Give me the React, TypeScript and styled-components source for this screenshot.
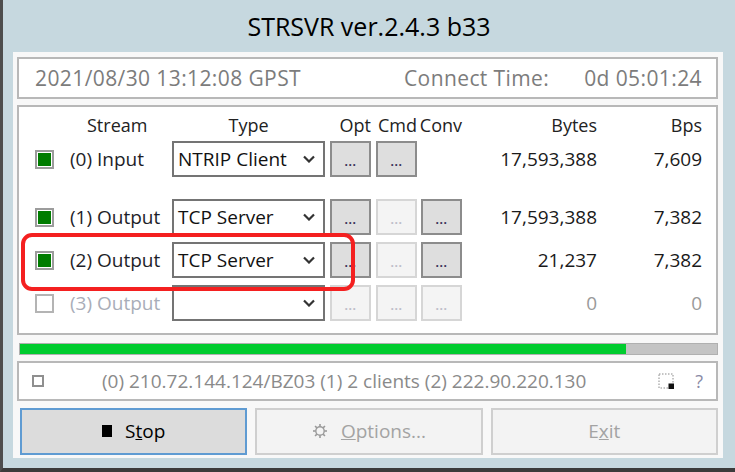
import React from "react";
import styled, { createGlobalStyle } from "styled-components";

const FONT = `"Open Sans", "Noto Sans", "DejaVu Sans", sans-serif`;
const COLS = "35px 102px 153px 46px 46px 45px 135px 105px";

const Global = createGlobalStyle`
  html, body { margin: 0; padding: 0; background: #c6d8df; }
  body { font-family: ${FONT}; }
  * { box-sizing: border-box; }
`;

const Window = styled.div`
  width: 735px;
  height: 472px;
  background: #c6d8df;
  border-left: 3px solid #4d4d4d;
  border-bottom: 4px solid #3b3b3b;
  display: flex;
  flex-direction: column;
  overflow: hidden;
`;

const TitleBar = styled.div`
  height: 52px;
  display: flex;
  align-items: center;
  justify-content: center;
  padding-bottom: 1px;
  font-size: 25px;
  color: #000;
`;

const Client = styled.div`
  flex: 1;
  margin: 0 12px 10px 10px;
  background: #f8f8f8;
  padding: 5px 5px 3px 4px;
  display: flex;
  flex-direction: column;
`;

const Panel = styled.div`
  background: #fff;
  border: 2px solid #b8b8b8;
`;

const TimePanel = styled(Panel)`
  height: 42px;
  display: flex;
  align-items: center;
  padding: 0 14px 0 16px;
  font-size: 21px;
  letter-spacing: 0.4px;
  color: #7c7c7c;
`;

const ConnectLabel = styled.span`
  margin-left: auto;
  margin-right: 35px;
`;

const StreamPanel = styled(Panel)`
  position: relative;
  margin-top: 6px;
  height: 230px;
  padding: 0 14px 12px 16px;
  display: flex;
  flex-direction: column;
  gap: 7px;
`;

const HeaderRow = styled.div`
  display: grid;
  grid-template-columns: ${COLS};
  height: 34px;
  align-items: center;
  font-size: 18px;
  color: #222;
  margin-bottom: -7px;
`;

const HeadCell = styled.span<{ $align?: "start" | "center" | "end"; $col: number; $pad?: number }>`
  grid-column: ${(p) => p.$col};
  justify-self: ${(p) => p.$align ?? "center"};
  padding-left: ${(p) => p.$pad ?? 0}px;
  padding-top: 2px;
`;

const Row = styled.div<{ $spaced?: boolean }>`
  display: grid;
  grid-template-columns: ${COLS};
  height: 36px;
  align-items: center;
  margin-bottom: ${(p) => (p.$spaced ? 15 : 0)}px;
`;

const Check = styled.span<{ $on: boolean }>`
  width: 19px;
  height: 19px;
  border: 2px solid ${(p) => (p.$on ? "#9c9c9c" : "#b4b4b4")};
  padding: 1px;
  background: ${(p) => (p.$on ? "#007c00" : "#fff")};
  background-clip: content-box;
`;

const Label = styled.span<{ $off?: boolean }>`
  font-size: 19px;
  color: ${(p) => (p.$off ? "#a9adb8" : "#1e1e28")};
  white-space: nowrap;
`;

const Combo = styled.div`
  width: 153px;
  height: 36px;
  border: 2px solid #747474;
  background: #fff;
  display: flex;
  align-items: center;
  justify-content: space-between;
  padding: 0 8px 0 4px;
  font-size: 19px;
  color: #111;
  white-space: nowrap;
`;

const DotBtn = styled.div<{ $off?: boolean }>`
  justify-self: end;
  width: 41px;
  height: 36px;
  border: 2px solid ${(p) => (p.$off ? "#d6d6d6" : "#8c8c8c")};
  background: ${(p) => (p.$off ? "#f4f4f4" : "#dedede")};
  color: ${(p) => (p.$off ? "#bdbdc8" : "#3a2e58")};
  display: flex;
  align-items: center;
  justify-content: center;
  padding-top: 5px;
  font-size: 12px;
  font-weight: 700;
  letter-spacing: 0.5px;
`;

const Num = styled.span<{ $off?: boolean }>`
  justify-self: end;
  font-size: 19px;
  color: ${(p) => (p.$off ? "#9a9a9a" : "#1a1a1a")};
`;

const Highlight = styled.div`
  position: absolute;
  left: 2px;
  top: 126px;
  width: 334px;
  height: 58px;
  border: 4px solid #f42020;
  border-radius: 11px;
  pointer-events: none;
`;

const Progress = styled.div`
  margin: 8px 0 0 2px;
  height: 12px;
  border: 1px solid #b0b0b0;
  background: #c4c4c4;
`;

const ProgressFill = styled.div`
  height: 100%;
  background: #00cc2e;
`;

const StatusPanel = styled(Panel)`
  margin-top: 6px;
  height: 40px;
  display: flex;
  align-items: center;
  padding: 0 13px 0 13px;
  font-size: 19px;
  color: #8a8a8a;
`;

const SmallCheck = styled.span`
  width: 12px;
  height: 12px;
  border: 2px solid #8f8f8f;
  background: #fff;
  flex: none;
`;

const StatusText = styled.span`
  margin-left: 58px;
  white-space: nowrap;
`;

const StatusIcons = styled.span`
  margin-left: auto;
  display: flex;
  align-items: center;
  gap: 20px;
`;

const Help = styled.span`
  color: #8a8aa6;
  font-size: 18px;
`;

const Buttons = styled.div`
  margin: 7px 0 0 3px;
  display: grid;
  grid-template-columns: 1fr 1fr 1fr;
  gap: 8px;
  height: 47px;
`;

const Btn = styled.div<{ $primary?: boolean }>`
  border: 2px solid ${(p) => (p.$primary ? "#5f9bd2" : "#cfcfcf")};
  background: ${(p) => (p.$primary ? "#dcdcdc" : "#f3f3f3")};
  color: ${(p) => (p.$primary ? "#000" : "#a3a3a3")};
  display: flex;
  align-items: center;
  justify-content: center;
  gap: 13px;
  font-size: 19px;
  padding-bottom: 2px;
`;

const StopSquare = styled.span`
  width: 10px;
  height: 12px;
  background: #000;
`;

const Chevron = () => (
  <svg width="12" height="8" viewBox="0 0 12 8">
    <path d="M1 1.5 L6 6.5 L11 1.5" fill="none" stroke="#333" strokeWidth="2.2" />
  </svg>
);

const Gear = () => (
  <svg width="16" height="16" viewBox="0 0 16 16">
    <circle cx="8" cy="8" r="4.2" fill="none" stroke="#9a9a9a" strokeWidth="1.4" />
    {[0, 45, 90, 135, 180, 225, 270, 315].map((a) => (
      <line
        key={a}
        x1="8"
        y1="1"
        x2="8"
        y2="3.6"
        stroke="#9a9a9a"
        strokeWidth="1.6"
        transform={`rotate(${a} 8 8)`}
      />
    ))}
  </svg>
);

const WinIcon = () => (
  <svg width="17" height="17" viewBox="0 0 17 17">
    <rect x="1" y="1" width="14" height="14" fill="none" stroke="#8a8a8a" strokeWidth="1" strokeDasharray="1.5 1.5" />
    <rect x="10.5" y="10.5" width="5.5" height="5.5" fill="#111" />
  </svg>
);

type StreamRow = {
  on: boolean;
  label: string;
  type: string;
  opt: boolean;
  cmd: boolean;
  conv: boolean | null;
  bytes: string;
  bps: string;
  off?: boolean;
};

const rows: StreamRow[] = [
  { on: true, label: "(0) Input", type: "NTRIP Client", opt: true, cmd: true, conv: null, bytes: "17,593,388", bps: "7,609" },
  { on: true, label: "(1) Output", type: "TCP Server", opt: true, cmd: false, conv: true, bytes: "17,593,388", bps: "7,382" },
  { on: true, label: "(2) Output", type: "TCP Server", opt: true, cmd: false, conv: true, bytes: "21,237", bps: "7,382" },
  { on: false, label: "(3) Output", type: "", opt: false, cmd: false, conv: false, bytes: "0", bps: "0", off: true },
];

export default function App() {
  const progress = 87;
  return (
    <>
      <Global />
      <Window>
        <TitleBar>STRSVR ver.2.4.3 b33</TitleBar>
        <Client>
          <TimePanel>
            <span>2021/08/30 13:12:08 GPST</span>
            <ConnectLabel>Connect Time:</ConnectLabel>
            <span>0d 05:01:24</span>
          </TimePanel>
          <StreamPanel>
            <HeaderRow>
              <HeadCell $col={2} $align="start" $pad={17}>Stream</HeadCell>
              <HeadCell $col={3}>Type</HeadCell>
              <HeadCell $col={4} $align="end">Opt</HeadCell>
              <HeadCell $col={5} $align="end">Cmd</HeadCell>
              <HeadCell $col={6} $align="end">Conv</HeadCell>
              <HeadCell $col={7} $align="end">Bytes</HeadCell>
              <HeadCell $col={8} $align="end">Bps</HeadCell>
            </HeaderRow>
            {rows.map((r, i) => (
              <Row key={i} $spaced={i === 0}>
                <Check $on={r.on} />
                <Label $off={r.off}>{r.label}</Label>
                <Combo>
                  <span>{r.type}</span>
                  <Chevron />
                </Combo>
                <DotBtn $off={!r.opt}>...</DotBtn>
                <DotBtn $off={!r.cmd}>...</DotBtn>
                {r.conv === null ? <span /> : <DotBtn $off={!r.conv}>...</DotBtn>}
                <Num $off={r.off}>{r.bytes}</Num>
                <Num $off={r.off}>{r.bps}</Num>
              </Row>
            ))}
            <Highlight />
          </StreamPanel>
          <Progress>
            <ProgressFill style={{ width: `${progress}%` }} />
          </Progress>
          <StatusPanel>
            <SmallCheck />
            <StatusText>(0) 210.72.144.124/BZ03 (1) 2 clients (2) 222.90.220.130</StatusText>
            <StatusIcons>
              <WinIcon />
              <Help>?</Help>
            </StatusIcons>
          </StatusPanel>
          <Buttons>
            <Btn $primary>
              <StopSquare />
              <span>
                S<u>t</u>op
              </span>
            </Btn>
            <Btn>
              <Gear />
              <span>
                <u>O</u>ptions...
              </span>
            </Btn>
            <Btn>
              <span>
                E<u>x</u>it
              </span>
            </Btn>
          </Buttons>
        </Client>
      </Window>
    </>
  );
}
